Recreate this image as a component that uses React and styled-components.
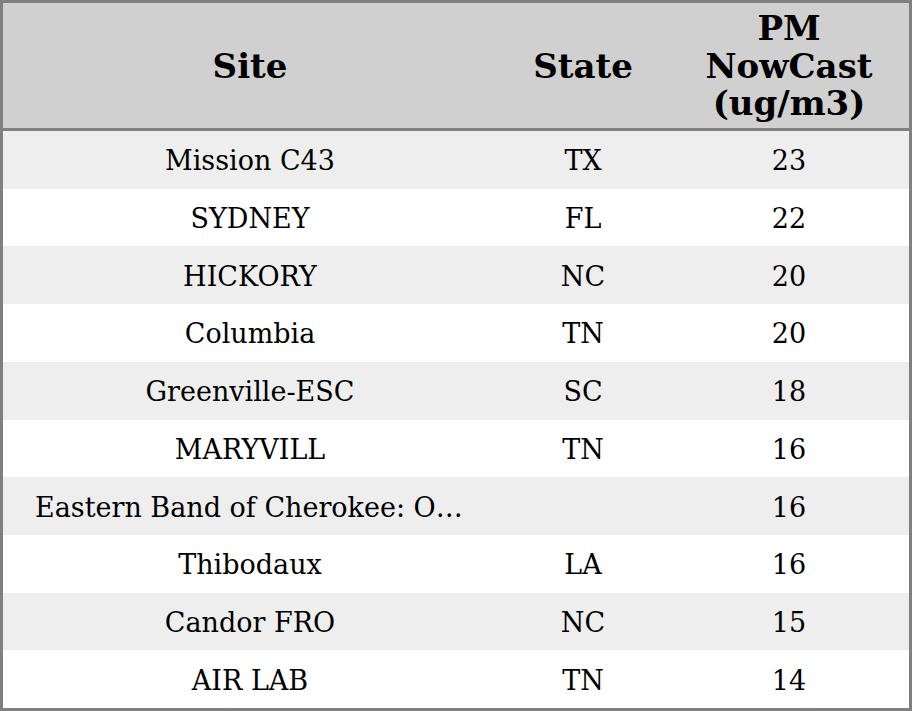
import React from "react";
import styled, { createGlobalStyle } from "styled-components";

const Global = createGlobalStyle`
  html, body { margin: 0; padding: 0; background: #ffffff; }
  body { font-family: "DejaVu Serif", serif; }
`;

const Table = styled.div`
  box-sizing: border-box;
  width: 912px;
  height: 711px;
  border: 3px solid #808080;
  display: flex;
  flex-direction: column;
  background: #ffffff;
`;

const Row = styled.div`
  display: grid;
  grid-template-columns: 494px 172px 240px;
  align-items: center;
  background: ${(p) => (p.$striped ? "#eeeeee" : "#ffffff")};
  flex: 1 1 0;
  min-height: 0;
`;

const HeaderRow = styled(Row)`
  flex: 0 0 125px;
  background: #d0d0d0;
  border-bottom: 3px solid #808080;
`;

const HeadCell = styled.div`
  font-family: "DejaVu Serif", serif;
  font-weight: bold;
  font-size: 34px;
  line-height: 37.5px;
  color: #000000;
  text-align: center;
  padding: 2px 8px 0;
`;

const Cell = styled.div`
  font-family: "DejaVu Serif", serif;
  font-size: 27px;
  color: #000000;
  text-align: center;
  padding: 2px 32px 0;
  white-space: nowrap;
  overflow: hidden;
  text-overflow: ellipsis;
`;

const rows = [
  ["Mission C43", "TX", "23"],
  ["SYDNEY", "FL", "22"],
  ["HICKORY", "NC", "20"],
  ["Columbia", "TN", "20"],
  ["Greenville-ESC", "SC", "18"],
  ["MARYVILL", "TN", "16"],
  ["Eastern Band of Cherokee: Oconaluftee", "", "16"],
  ["Thibodaux", "LA", "16"],
  ["Candor FRO", "NC", "15"],
  ["AIR LAB", "TN", "14"],
];

export default function App() {
  return (
    <>
      <Global />
      <Table>
        <HeaderRow>
          <HeadCell>Site</HeadCell>
          <HeadCell>State</HeadCell>
          <HeadCell>
            PM
            <br />
            NowCast
            <br />
            (ug/m3)
          </HeadCell>
        </HeaderRow>
        {rows.map((r, i) => (
          <Row key={i} $striped={i % 2 === 0}>
            <Cell>{r[0]}</Cell>
            <Cell>{r[1]}</Cell>
            <Cell>{r[2]}</Cell>
          </Row>
        ))}
      </Table>
    </>
  );
}
